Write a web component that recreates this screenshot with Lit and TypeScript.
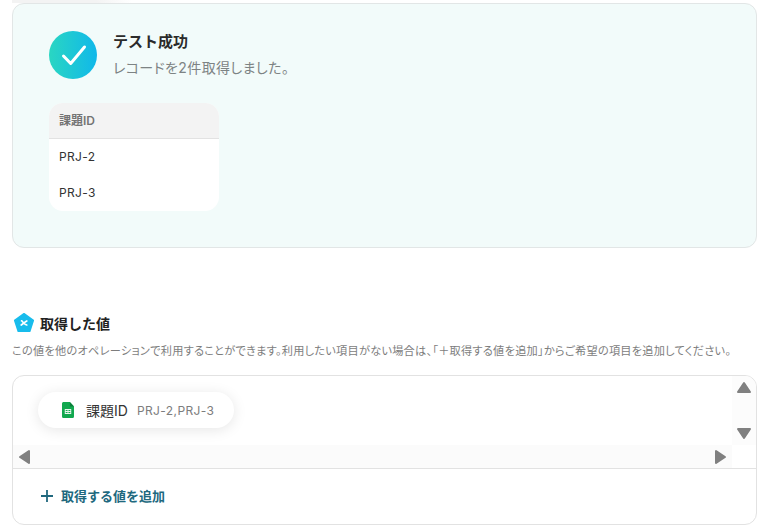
import { LitElement, html, css } from 'lit';
import { customElement } from 'lit/decorators.js';

const rows = ['PRJ-2', 'PRJ-3'];

@customElement('app-root')
export class AppRoot extends LitElement {
  static styles = css`
    :host {
      display: block;
      width: 768px;
      height: 528px;
      overflow: hidden;
      background: #fff;
      box-sizing: border-box;
      padding: 0 11px 0 12px;
      font-family: Inter, 'Noto Sans CJK JP', sans-serif;
      color: #2b2b2b;
    }
    .top-fade {
      height: 3px;
      width: 120px;
      background: linear-gradient(90deg, #f3f3f3 70%, #fff);
    }
    .result {
      box-sizing: border-box;
      height: 245px;
      padding: 27px 36px 0;
      background: #f2fbfa;
      border: 1px solid #e2e6e6;
      border-radius: 12px;
    }
    .status {
      display: flex;
      gap: 16px;
      height: 50px;
    }
    .check {
      width: 48px;
      height: 48px;
      flex: none;
      border-radius: 50%;
      background: linear-gradient(90deg, #2ad6c2, #10b8ea);
      display: flex;
      align-items: center;
      justify-content: center;
    }
    .status-title {
      font-size: 15px;
      font-weight: 700;
      line-height: 22px;
    }
    .status-sub {
      font-size: 14px;
      line-height: 20px;
      margin-top: 5px;
      color: #7d8384;
      letter-spacing: 0.38px;
      font-feature-settings: 'palt';
    }
    .table {
      width: 170px;
      margin-top: 22px;
      border-radius: 14px;
      overflow: hidden;
      background: #fff;
      font-size: 12px;
    }
    .table-head {
      height: 36px;
      box-sizing: border-box;
      padding: 0 0 2px 10px;
      display: flex;
      align-items: center;
      background: #f3f3f3;
      border-bottom: 1px solid #e2e2e2;
      font-weight: 600;
      color: #737373;
    }
    .table-row {
      height: 36px;
      box-sizing: border-box;
      padding: 0 0 1px 10px;
      display: flex;
      align-items: center;
      color: #333;
      letter-spacing: 0.35px;
    }
    .values-title {
      display: flex;
      align-items: center;
      gap: 5px;
      margin-top: 63px;
      height: 24px;
      font-size: 14px;
      font-weight: 600;
      color: #222;
    }
    .values-desc {
      margin-top: 8px;
      font-size: 11.2px;
      line-height: 16px;
      color: #7d7d7d;
      letter-spacing: 0.25px;
      white-space: nowrap;
      font-feature-settings: 'palt';
    }
    .box {
      box-sizing: border-box;
      margin-top: 16px;
      height: 150px;
      border: 1px solid #e2e2e2;
      border-radius: 12px;
      overflow: hidden;
      background: #fff;
    }
    .scroller {
      display: grid;
      grid-template-columns: 1fr 24px;
      grid-template-rows: 69px 23px;
      border-bottom: 1px solid #e2e2e2;
    }
    .content {
      padding: 16px 25px;
      overflow: hidden;
    }
    .pill {
      display: inline-flex;
      align-items: center;
      height: 36px;
      padding: 0 20px 0 24px;
      border-radius: 18px;
      background: #fff;
      box-shadow: 0 2px 14px rgba(0, 0, 0, 0.1);
      font-size: 14px;
      color: #333;
    }
    .pill-name {
      margin-left: 12px;
    }
    .pill-value {
      margin-left: 9px;
      font-size: 12px;
      color: #7d7d7d;
      letter-spacing: 0.4px;
    }
    .bar-v {
      background: #fcfcfc;
      display: flex;
      flex-direction: column;
      justify-content: space-between;
      align-items: center;
      padding: 4px 0;
    }
    .bar-h {
      background: #fbfbfb;
      display: flex;
      justify-content: space-between;
      align-items: center;
      padding: 0 4px;
    }
    .corner {
      background: #fff;
    }
    .add {
      display: flex;
      align-items: center;
      gap: 7px;
      box-sizing: border-box;
      height: 55px;
      padding: 0 0 2px 27px;
      font-size: 13px;
      font-weight: 600;
      color: #20687e;
    }
    svg {
      display: block;
    }
  `;

  arrow(points: string) {
    return html`<svg width="16" height="16" viewBox="0 0 16 16">
      <polygon points=${points} fill="#808080" stroke="#808080" stroke-width="2" stroke-linejoin="round"></polygon>
    </svg>`;
  }

  render() {
    return html`
      <div class="top-fade"></div>
      <section class="result">
        <div class="status">
          <div class="check">
            <svg width="30" height="30" viewBox="0 0 30 30">
              <path d="M5.5 16 L12.7 23.5 L26.5 7" fill="none" stroke="#fff" stroke-width="3" stroke-linecap="round" stroke-linejoin="round"></path>
            </svg>
          </div>
          <div>
            <div class="status-title">テスト成功</div>
            <div class="status-sub">レコードを2件取得しました。</div>
          </div>
        </div>
        <div class="table">
          <div class="table-head">課題ID</div>
          ${rows.map((r) => html`<div class="table-row">${r}</div>`)}
        </div>
      </section>

      <div class="values-title">
        <svg width="23" height="22" viewBox="0 0 23 22">
          <path d="M12 1.7 L21.3 8.4 L17.8 19.2 H6.2 L2.7 8.4 Z" fill="#18bcec" stroke="#18bcec" stroke-width="1.5" stroke-linejoin="round"></path>
          <path d="M9.5 8.8 C10.8 9.4 12 12.2 14.8 13 M14.8 9 C13 9.8 11.2 11.8 9.2 13" fill="none" stroke="#fff" stroke-width="1.7" stroke-linecap="round"></path>
        </svg>
        取得した値
      </div>
      <div class="values-desc">この値を他のオペレーションで利用することができます。利用したい項目がない場合は、「＋取得する値を追加」からご希望の項目を追加してください。</div>

      <div class="box">
        <div class="scroller">
          <div class="content">
            <div class="pill">
              <svg width="12" height="16" viewBox="0 0 13 16" preserveAspectRatio="none">
                <path d="M1.5 0 H8.5 L13 4.5 V14.5 A1.5 1.5 0 0 1 11.5 16 H1.5 A1.5 1.5 0 0 1 0 14.5 V1.5 A1.5 1.5 0 0 1 1.5 0 Z" fill="#12a84f"></path>
                <path d="M8.5 0 L13 4.5 H8.5 Z" fill="#0b7f3a"></path>
                <path d="M3 7 H10 V12 H3 Z M4 8 V9 H6 V8 Z M7 8 V9 H9 V8 Z M4 10 V11 H6 V10 Z M7 10 V11 H9 V10 Z" fill="#e8f5ec" fill-rule="evenodd"></path>
              </svg>
              <span class="pill-name">課題ID</span>
              <span class="pill-value">PRJ-2,PRJ-3</span>
            </div>
          </div>
          <div class="bar-v">
            ${this.arrow('8,3 14,12 2,12')}
            ${this.arrow('2,4 14,4 8,13')}
          </div>
          <div class="bar-h">
            ${this.arrow('12,2 12,14 3,8')}
            ${this.arrow('4,2 4,14 13,8')}
          </div>
          <div class="corner"></div>
        </div>
        <div class="add">
          <svg width="14" height="14" viewBox="0 0 14 14">
            <path d="M7 1 V13 M1 7 H13" stroke="#20687e" stroke-width="1.8"></path>
          </svg>
          取得する値を追加
        </div>
      </div>
    `;
  }
}
